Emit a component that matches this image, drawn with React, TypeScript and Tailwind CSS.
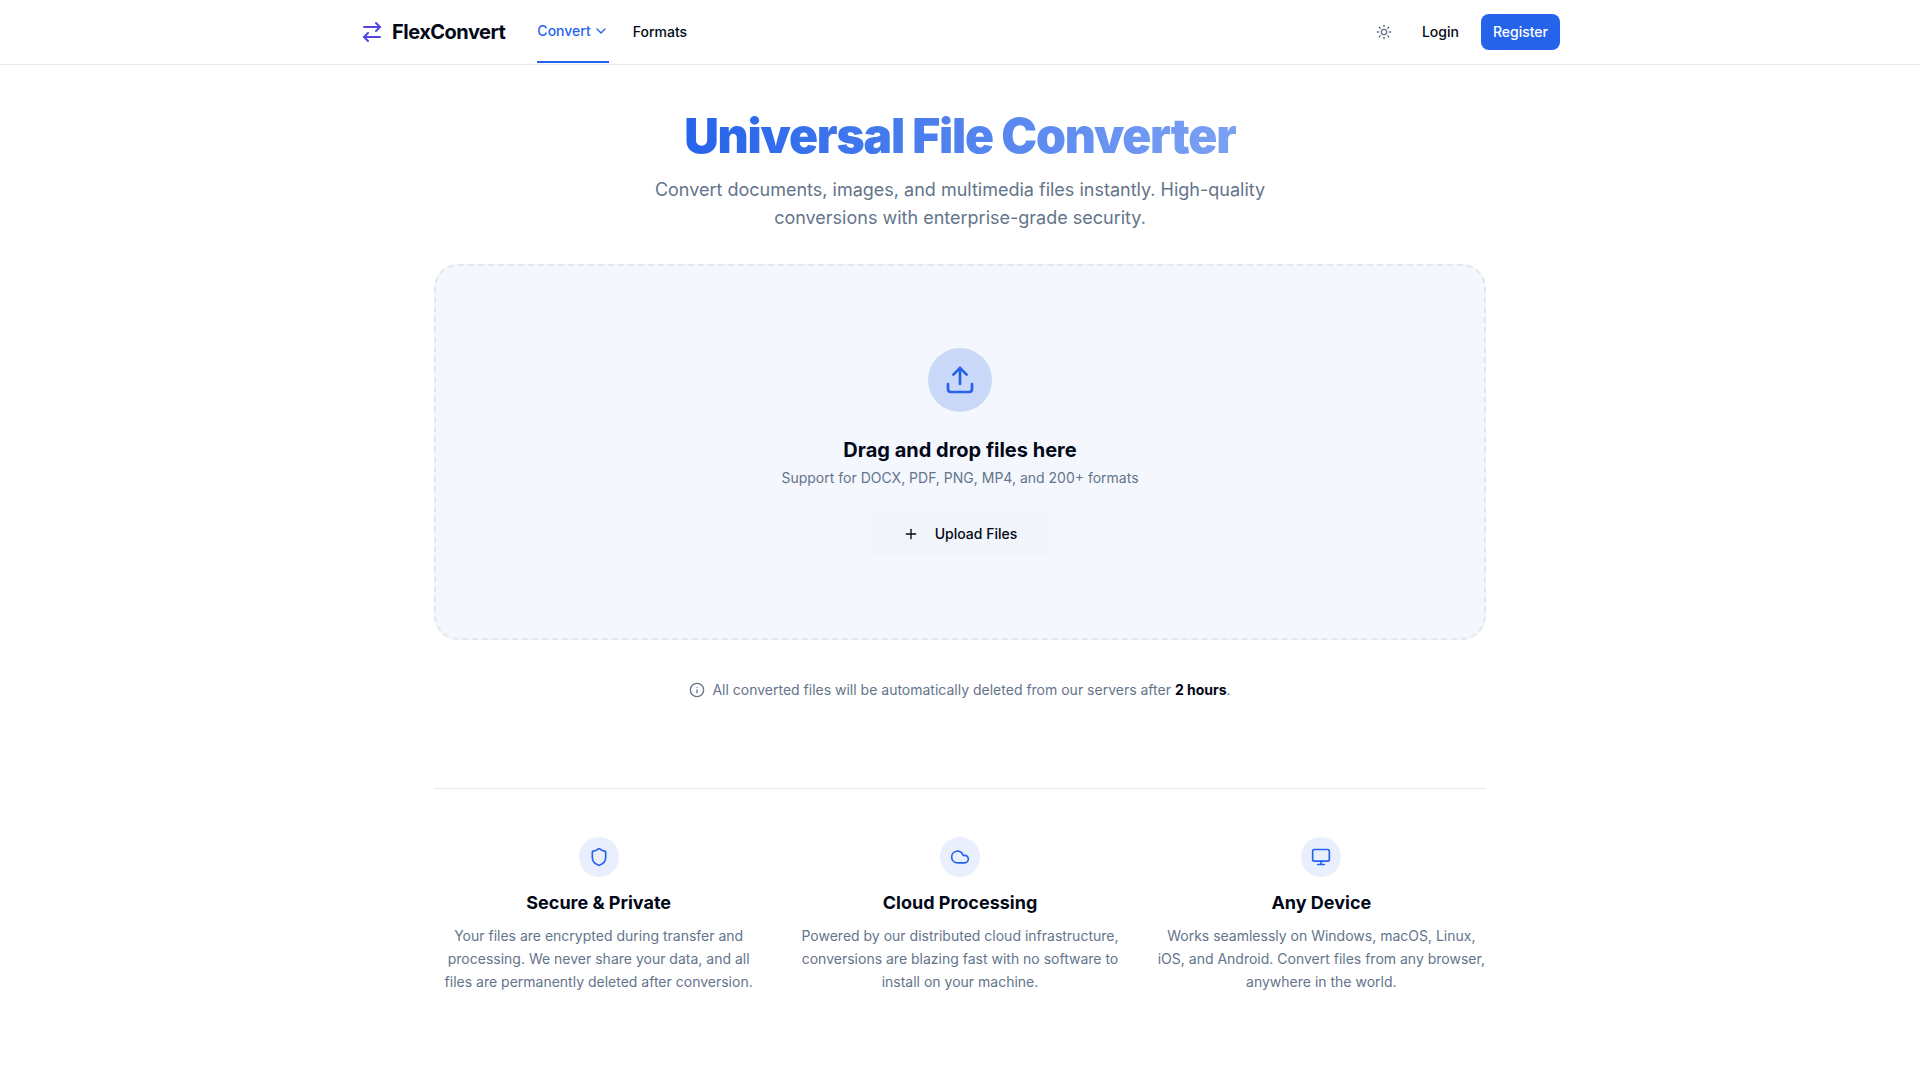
import { ArrowRightLeft, ChevronDown, Cloud, Info, Monitor, Plus, Shield, Sun, Upload } from "lucide-react";

const features = [
  {
    icon: Shield,
    title: "Secure & Private",
    text: "Your files are encrypted during transfer and processing. We never share your data, and all files are permanently deleted after conversion.",
  },
  {
    icon: Cloud,
    title: "Cloud Processing",
    text: "Powered by our distributed cloud infrastructure, conversions are blazing fast with no software to install on your machine.",
  },
  {
    icon: Monitor,
    title: "Any Device",
    text: "Works seamlessly on Windows, macOS, Linux, iOS, and Android. Convert files from any browser, anywhere in the world.",
  },
];

const App = () => {
  return (
    <div className="min-h-screen bg-white font-['Inter',sans-serif] text-[#020817]">
      {/* Navbar */}
      <header className="h-[65px] border-b border-[#e2e8f0]">
        <div className="mx-auto flex h-16 w-[1200px] items-center justify-between">
          <div className="flex h-full items-center">
            <div className="flex items-center gap-2">
              <ArrowRightLeft className="h-6 w-6 text-[#4f46e5]" />
              <span className="text-xl font-bold tracking-tight">FlexConvert</span>
            </div>
            <nav className="ml-8 flex h-full items-center gap-6 text-sm font-medium">
              <div className="flex h-[63px] items-center gap-0.5 self-start border-b-2 border-[#2563eb] text-[#2563eb]">
                Convert
                <ChevronDown className="h-4 w-4" />
              </div>
              <span>Formats</span>
            </nav>
          </div>
          <div className="flex items-center">
            <button className="flex h-9 w-9 items-center justify-center text-[#64748b]">
              <Sun className="h-4 w-4" />
            </button>
            <button className="ml-2 h-9 px-3 text-sm font-medium">Login</button>
            <button className="ml-2.5 h-9 rounded-lg bg-[#2563eb] px-3 text-sm font-medium text-white">Register</button>
          </div>
        </div>
      </header>

      <main className="mx-auto flex w-[1052px] flex-col items-center pt-[47px]">
        <h1 className="bg-gradient-to-r from-[#2563eb] to-[#2563eb]/60 bg-clip-text text-5xl font-black tracking-tight text-transparent">
          Universal File Converter
        </h1>
        <p className="mt-4 w-[672px] text-center text-lg text-[#64748b]">
          Convert documents, images, and multimedia files instantly. High-quality conversions with enterprise-grade security.
        </p>

        {/* Dropzone */}
        <div className="mt-8 flex h-[376px] w-full flex-col items-center justify-center rounded-3xl border-2 border-dashed border-[#e2e8f0] bg-[#f4f7fe]">
          <div className="flex h-16 w-16 items-center justify-center rounded-full bg-[#2563eb]/20">
            <Upload className="h-8 w-8 text-[#2563eb]" />
          </div>
          <h2 className="mt-6 text-xl font-bold">Drag and drop files here</h2>
          <p className="mt-1 text-sm text-[#64748b]">Support for DOCX, PDF, PNG, MP4, and 200+ formats</p>
          <button className="mt-6 flex h-11 items-center gap-4 rounded-lg bg-[#f1f5f9] px-8 text-sm font-medium">
            <Plus className="h-4 w-4" />
            Upload Files
          </button>
        </div>

        <div className="mt-10 flex items-center gap-[7px] text-sm text-[#64748b]">
          <Info className="h-4 w-4" />
          <span>
            All converted files will be automatically deleted from our servers after{" "}
            <strong className="font-bold text-[#020817]">2 hours</strong>.
          </span>
        </div>

        {/* Features */}
        <div className="mt-[88px] grid w-full grid-cols-3 gap-8 border-t border-[#e2e8f0] pt-12">
          {features.map((f) => (
            <div key={f.title} className="flex flex-col items-center text-center">
              <div className="flex h-10 w-10 items-center justify-center rounded-full bg-[#2563eb]/10">
                <f.icon className="h-5 w-5 text-[#2563eb]" />
              </div>
              <h3 className="mt-3 text-lg font-bold">{f.title}</h3>
              <p className="mt-2 text-sm leading-relaxed text-[#64748b]">{f.text}</p>
            </div>
          ))}
        </div>
      </main>
    </div>
  );
};

export default App;
